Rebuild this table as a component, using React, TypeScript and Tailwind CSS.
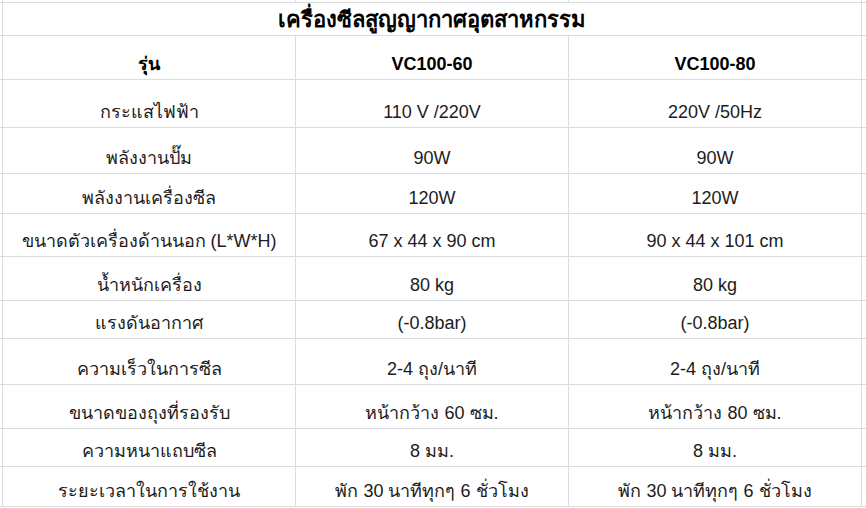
const rows: { label: string; a: string; b: string; h: string }[] = [
  { label: "กระแสไฟฟ้า", a: "110 V /220V", b: "220V /50Hz", h: "h-[48px]" },
  { label: "พลังงานปั๊ม", a: "90W", b: "90W", h: "h-[46px]" },
  { label: "พลังงานเครื่องซีล", a: "120W", b: "120W", h: "h-[40px]" },
  { label: "ขนาดตัวเครื่องด้านนอก (L*W*H)", a: "67 x 44 x 90 cm", b: "90 x 44 x 101 cm", h: "h-[43px]" },
  { label: "น้ำหนักเครื่อง", a: "80 kg", b: "80 kg", h: "h-[44px]" },
  { label: "แรงดันอากาศ", a: "(-0.8bar)", b: "(-0.8bar)", h: "h-[38px]" },
  { label: "ความเร็วในการซีล", a: "2-4 ถุง/นาที", b: "2-4 ถุง/นาที", h: "h-[46px]" },
  { label: "ขนาดของถุงที่รองรับ", a: "หน้ากว้าง 60 ซม.", b: "หน้ากว้าง 80 ซม.", h: "h-[44px]" },
  { label: "ความหนาแถบซีล", a: "8 มม.", b: "8 มม.", h: "h-[38px]" },
  { label: "ระยะเวลาในการใช้งาน", a: "พัก 30 นาทีทุกๆ 6 ชั่วโมง", b: "พัก 30 นาทีทุกๆ 6 ชั่วโมง", h: "h-[40px]" },
]

// spreadsheet cell: bottom aligned like Excel
function Cell({ children, bold, className = "" }: { children?: React.ReactNode; bold?: boolean; className?: string }) {
  return (
    <div
      className={`flex items-end justify-center border-r border-b border-[#dadcdf] pb-[4px] leading-[22px] whitespace-nowrap ${
        bold ? "font-bold text-black" : "text-[#1c1c1c]"
      } ${className}`}
    >
      {children}
    </div>
  )
}

function Edge({ h }: { h: string }) {
  return <div className={`${h} border-r border-b border-[#dadcdf]`} />
}

export default function App() {
  return (
    <main
      className="w-[866px] h-[508px] overflow-hidden bg-white text-[18px]"
      style={{ fontFamily: '"Liberation Sans", "DejaVu Sans", "Noto Sans", sans-serif' }}
    >
      <div className="grid grid-cols-[3px_293px_273px_293px_1fr]">
        {/* top sliver row */}
        <Edge h="h-[3px]" />
        <Edge h="h-[3px]" />
        <Edge h="h-[3px]" />
        <Edge h="h-[3px]" />
        <div className="h-[3px] border-b border-[#dadcdf]" />

        {/* title */}
        <Edge h="h-[33px]" />
        <Cell bold className="col-span-3 h-[33px] text-[22px] pb-[3px]">เครื่องซีลสูญญากาศอุตสาหกรรม</Cell>
        <div className="h-[33px] border-b border-[#dadcdf]" />

        {/* header */}
        <Edge h="h-[44px]" />
        <Cell bold className="h-[44px]">รุ่น</Cell>
        <Cell bold className="h-[44px]">VC100-60</Cell>
        <Cell bold className="h-[44px]">VC100-80</Cell>
        <div className="h-[44px] border-b border-[#dadcdf]" />

        {rows.map((r) => (
          <div key={r.label} className="contents">
            <Edge h={r.h} />
            <Cell className={r.h}>{r.label}</Cell>
            <Cell className={r.h}>{r.a}</Cell>
            <Cell className={r.h}>{r.b}</Cell>
            <div className={`${r.h} border-b border-[#dadcdf]`} />
          </div>
        ))}
      </div>
    </main>
  )
}
